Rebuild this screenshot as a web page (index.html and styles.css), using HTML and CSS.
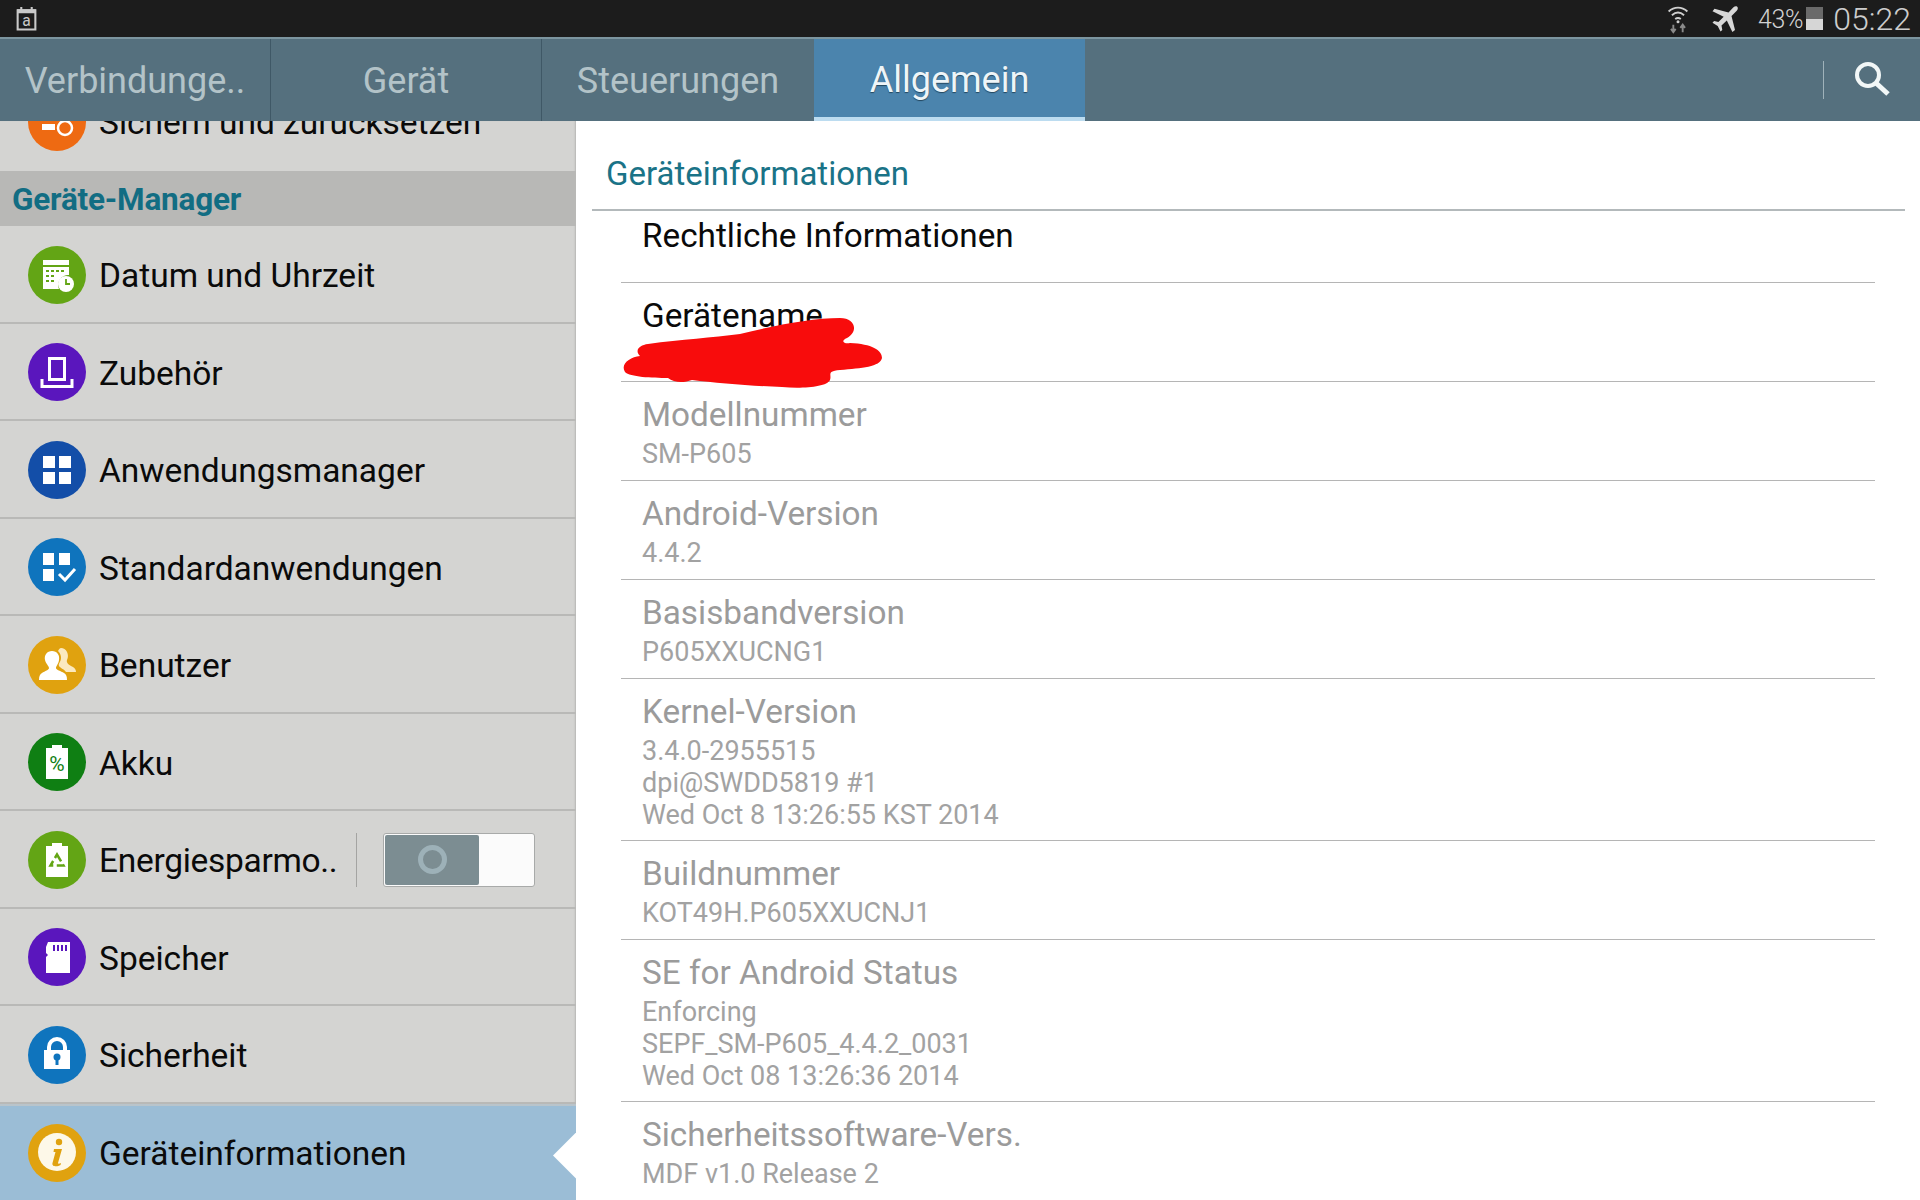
FILE: index.html
```html
<!DOCTYPE html>
<html lang="de">
<head>
<meta charset="utf-8">
<title>Geräteinformationen</title>
<link rel="stylesheet" href="styles.css">
</head>
<body>
<div class="screen">
  <header class="status">
    <svg class="st-cal" viewBox="0 0 20 24"><path d="M1.500 4h17v18.500h-17z" fill="none" stroke="#c9c9c9" stroke-width="2"/><path d="M1 3h18v4H1zM4 1h2v3H4zM14 1h2v3h-2z" fill="#c9c9c9"/><text x="10" y="19" text-anchor="middle" class="st-a">a</text></svg>
    <div class="status-right">
      <svg class="st-wifi" viewBox="0 0 24 32"><path d="M2 8c6-5.500 14-5.500 20 0M5.500 12c4-3.500 9-3.500 13 0M9 16c2-1.500 4-1.500 6 0" fill="none" stroke="#cfcfcf" stroke-width="2"/><circle cx="12" cy="19" r="1.600" fill="#cfcfcf"/><path d="M7 22v7M4.500 26.500L7 30l2.500-3.500" fill="none" stroke="#8a8a8a" stroke-width="2"/><path d="M17 30v-7M14.500 25.500L17 22l2.500 3.500" fill="none" stroke="#8a8a8a" stroke-width="2"/></svg>
      <svg class="st-plane" viewBox="0 0 28 28"><path d="M26 1.500c1.500 1 .8 3.200-.5 4.600L20.500 11l3.500 14-2.600 2-5.600-11.500-5.300 5 .8 4.500-1.800 1.500-2.800-5.500-5.200-3.200 1.600-1.700 4.300.9 5.300-5.300L1.500 6.200l2-2.500 14 3.700L22.200 2.500C23.500 1.300 25 .8 26 1.500z" fill="#d8d8d8"/></svg>
      <span class="st-pct">43%</span>
      <span class="st-batt"><span class="st-batt-fill"></span></span>
      <span class="st-time">05:22</span>
    </div>
  </header>

  <nav class="tabs">
    <div class="tab">Verbindunge..</div>
    <div class="tab">Gerät</div>
    <div class="tab">Steuerungen</div>
    <div class="tab tab-active">Allgemein</div>
    <div class="tab-spacer"></div>
    <div class="tab-search">
      <svg class="search-icon" viewBox="0 0 40 40"><circle cx="16" cy="15" r="11" fill="none" stroke="#f2f7f7" stroke-width="4"/><path d="M24 23l12 11" stroke="#f2f7f7" stroke-width="5"/></svg>
    </div>
  </nav>

  <main class="body">
    <aside class="side">
      <div class="row row-cut">
        <span class="ico ic-orange"><svg viewBox="0 0 58 58"><path d="M14 24h13v4H14zM14 31h13v6H14z" fill="#fff"/><circle cx="37" cy="35" r="7" fill="none" stroke="#fff" stroke-width="2.500"/></svg></span>
        <span class="row-text">Sichern und zurücksetzen</span>
      </div>
      <div class="side-head">Geräte-Manager</div>

      <div class="row">
        <span class="ico ic-lime"><svg viewBox="0 0 58 58"><path d="M15 14h26v5H15z" fill="#fff"/><path d="M15 21h26v8a10 10 0 0 0-10 14H15z" fill="#fff"/><path d="M18 24h3v2h-3zM23 24h3v2h-3zM28 24h3v2h-3zM33 24h3v2h-3zM18 29h3v2h-3zM23 29h3v2h-3zM18 34h3v2h-3zM23 34h3v2h-3z" fill="#63a515"/><circle cx="38" cy="38" r="8" fill="#fff"/><path d="M38 33v5h4" fill="none" stroke="#63a515" stroke-width="1.800"/></svg></span>
        <span class="row-text">Datum und Uhrzeit</span>
      </div>
      <div class="row">
        <span class="ico ic-purple"><svg viewBox="0 0 58 58"><path d="M21.500 15.500h15v21h-15z" fill="none" stroke="#fff" stroke-width="3"/><path d="M14 36v7.500h30V36" fill="none" stroke="#fff" stroke-width="3"/></svg></span>
        <span class="row-text">Zubehör</span>
      </div>
      <div class="row">
        <span class="ico ic-navy"><svg viewBox="0 0 58 58"><path d="M15 15h12v12H15zM31 15h12v12H31zM15 31h12v12H15zM31 31h12v12H31z" fill="#fff"/></svg></span>
        <span class="row-text">Anwendungsmanager</span>
      </div>
      <div class="row">
        <span class="ico ic-blue"><svg viewBox="0 0 58 58"><path d="M15 15h11v12H15zM31 15h11v12H31zM15 31h11v12H15z" fill="#fff"/><path d="M31 36l6 6 10-11" fill="none" stroke="#fff" stroke-width="3"/></svg></span>
        <span class="row-text">Standardanwendungen</span>
      </div>
      <div class="row">
        <span class="ico ic-amber"><svg viewBox="0 0 58 58"><path d="M33 12a7 8 0 0 1 6 12c-1 3 2 5 6 7 2 1 3 3 3 5H38c-2-3-6-4-7-6-1-3 2-4 2-8 0-3-1-5-3-7 1-2 2-3 3-3z" fill="#fbe9bf"/><path d="M24 15c5 0 8 4 7 9-.5 4-3 6-3 8 0 2 5 3 8 5 2 1 3 3 3 7H11c0-4 1-6 3-7 3-2 7-3 7-5s-3-4-4-8c-1-5 2-9 7-9z" fill="#fff"/></svg></span>
        <span class="row-text">Benutzer</span>
      </div>
      <div class="row">
        <span class="ico ic-green"><svg viewBox="0 0 58 58"><path d="M24 12h10v3h6v31H18V15h6z" fill="#fff"/><text x="29" y="38" text-anchor="middle" class="ico-pct">%</text></svg></span>
        <span class="row-text">Akku</span>
      </div>
      <div class="row">
        <span class="ico ic-lime"><svg viewBox="0 0 58 58"><path d="M24 12h10v3h6v31H18V15h6z" fill="#fff"/><path d="M29 23.500l6.500 11H22.500z" fill="none" stroke="#63a515" stroke-width="2.500" stroke-dasharray="8 3.500"/></svg></span>
        <span class="row-text row-text-fill">Energiesparmo..</span>
        <span class="row-sep"></span>
        <span class="switch"><span class="switch-knob"><span class="switch-ring"></span></span></span>
      </div>
      <div class="row">
        <span class="ico ic-purple"><svg viewBox="0 0 58 58"><path d="M20 14h22v31H18V29l2-2-2-2v-6z" fill="#fff"/><path d="M25 17h2v6h-2zM29 17h2v6h-2zM33 17h2v6h-2zM37 17h2v6h-2z" fill="#5a16bd"/></svg></span>
        <span class="row-text">Speicher</span>
      </div>
      <div class="row">
        <span class="ico ic-blue"><svg viewBox="0 0 58 58"><path d="M21 25v-4a8 8 0 0 1 16 0v4" fill="none" stroke="#fff" stroke-width="4"/><path d="M16 24h26v19H16z" fill="#fff"/><circle cx="29" cy="31" r="3.500" fill="#0f74bd"/><path d="M27.500 32h3v7h-3z" fill="#0f74bd"/></svg></span>
        <span class="row-text">Sicherheit</span>
      </div>
      <div class="row row-active">
        <span class="ico ic-amber"><svg viewBox="0 0 58 58"><circle cx="29" cy="28" r="19" fill="#fdf8e8"/><circle cx="31" cy="18" r="3.200" fill="#e0a20f"/><path d="M26 25h8l-4 14c0 1 1 1 3 0l-.5 2c-3 2-9 2-8-2l3-11h-2z" fill="#e0a20f"/></svg></span>
        <span class="row-text">Geräteinformationen</span>
        <span class="notch"></span>
      </div>
    </aside>

    <section class="detail">
      <h1 class="detail-title">Geräteinformationen</h1>
      <div class="list">
        <div class="item item-short"><div class="item-title item-dark">Rechtliche Informationen</div></div>
        <div class="item"><div class="item-title item-dark">Gerätename</div></div>
        <div class="item"><div class="item-title">Modellnummer</div><div class="item-sub">SM-P605</div></div>
        <div class="item"><div class="item-title">Android-Version</div><div class="item-sub">4.4.2</div></div>
        <div class="item"><div class="item-title">Basisbandversion</div><div class="item-sub">P605XXUCNG1</div></div>
        <div class="item item-tall"><div class="item-title">Kernel-Version</div><div class="item-sub">3.4.0-2955515<br>dpi@SWDD5819 #1<br>Wed Oct 8 13:26:55 KST 2014</div></div>
        <div class="item"><div class="item-title">Buildnummer</div><div class="item-sub">KOT49H.P605XXUCNJ1</div></div>
        <div class="item item-tall"><div class="item-title">SE for Android Status</div><div class="item-sub">Enforcing<br>SEPF_SM-P605_4.4.2_0031<br>Wed Oct 08 13:26:36 2014</div></div>
        <div class="item item-last"><div class="item-title">Sicherheitssoftware-Vers.</div><div class="item-sub">MDF v1.0 Release 2</div></div>
      </div>
      <svg class="scribble" viewBox="0 0 270 72"><path d="M26 27C60 22 90 21 118 17C150 9 190 1 218 1C233 1 237 14 225 21C218 24 222 27 228 26C250 27 260 33 260 41C258 50 240 51 218 53C204 54 210 58 208 63C205 70 180 72 160 70C130 69 95 66 70 63C62 66 52 66 46 61C30 61 8 60 3 55C-2 47 8 40 18 39C12 33 18 28 26 27Z" fill="#f80c0c"/></svg>
    </section>
  </main>
</div>
</body>
</html>
```

FILE: styles.css
```css
* { box-sizing: border-box; }
html, body { margin: 0; padding: 0; }
body { width: 1920px; height: 1200px; overflow: hidden; background: #fff; font-family: Roboto, "Liberation Sans", sans-serif; }
.screen { width: 1920px; height: 1200px; display: flex; flex-direction: column; overflow: hidden; }

.status { height: 37px; flex: none; background: #1c1c1c; display: flex; align-items: center; justify-content: space-between; padding: 0 9px 0 16px; }
.st-cal { width: 21px; height: 25px; }
.st-a { font-size: 15px; fill: #c9c9c9; font-family: Roboto, sans-serif; }
.status-right { display: flex; align-items: center; }
.st-wifi { width: 26px; height: 30px; margin-right: 20px; }
.st-plane { width: 28px; height: 28px; margin-right: 19px; }
.st-pct { font-size: 25px; font-weight: 300; color: #d2d2d2; letter-spacing: -0.3px; padding-top: 2px; }
.st-batt { width: 17px; height: 23px; margin: 0 10px 0 3px; background: #6a6a6a; display: flex; align-items: flex-end; }
.st-batt-fill { display: block; width: 100%; height: 11px; background: #d6d6d6; }
.st-time { font-size: 32px; font-weight: 300; color: #cdcdcd; line-height: 36px; }

.tabs { height: 84px; flex: none; display: flex; background: #55707e; border-top: 2px solid #7c959f; position: relative; z-index: 2; }
.tab { width: 271px; display: flex; align-items: center; justify-content: center; font-size: 36px; color: #b3c3c8; border-right: 1px solid #3f5866; white-space: nowrap; padding-top: 1px; }
.tab:nth-child(3) { border-right: 0; width: 272px; }
.tab-active { background: #4b84ad; color: #eef5f8; border-right: 0; border-bottom: 4px solid #bcdcf0; padding-top: 4px; text-shadow: 0 1px 1px #23475f; }
.tab-spacer { flex: 1; }
.tab-search { width: 97px; display: flex; align-items: center; justify-content: center; position: relative; }
.tab-search::before { content: ""; position: absolute; left: 0; top: 22px; height: 38px; border-left: 1px solid #9fb2ba; }
.search-icon { width: 40px; height: 40px; }

.body { flex: 1; display: flex; min-height: 0; position: relative; }
.side { width: 576px; flex: none; background: #d4d4d2; overflow: hidden; box-shadow: inset -2px 0 2px -1px #b5b5b3; }
.row { height: 97.500px; display: flex; align-items: center; padding: 2px 0 0 28px; border-bottom: 2px solid #b9b9b7; position: relative; }
.row-cut { margin-top: -47.500px; border-bottom: 0; padding-top: 0; }
.ico { width: 58px; height: 58px; border-radius: 50%; flex: none; margin-right: 13px; display: block; }
.ico svg { width: 58px; height: 58px; display: block; }
.ic-orange { background: #ee6a12; }
.ic-lime { background: #63a515; }
.ic-purple { background: #5a16bd; }
.ic-navy { background: #134ea8; }
.ic-blue { background: #0f74bd; }
.ic-amber { background: #e0a20f; }
.ic-green { background: #0f7f13; }
.ico-pct { font-size: 21px; fill: #0f7f13; font-family: Roboto, sans-serif; }
.row-text { font-size: 33.500px; color: #0a0a0a; white-space: nowrap; padding-top: 2px; }
.row-cut .row-text, .row-active .row-text { padding-top: 0; }
.row-text-fill { width: 257px; letter-spacing: -0.3px; }
.row-sep { height: 54px; border-left: 1px solid #a4a4a2; }
.switch { width: 152px; height: 54px; margin-left: 26px; border: 1px solid #a8aaa9; border-radius: 3px; background: #fbfbfb; padding: 1px; display: block; }
.switch-knob { width: 94px; height: 100%; background: #7c8d92; border-radius: 2px; display: flex; align-items: center; justify-content: center; }
.switch-ring { width: 29px; height: 29px; border-radius: 50%; border: 5px solid #9db1b8; }
.row-active { background: #9bbdd6; border-bottom: 0; border-top: 2px solid #b9c4cb; padding-top: 0; }
.notch { position: absolute; right: 0; top: 27px; width: 23px; height: 46px; background: #fff; clip-path: polygon(100% 0, 0 50%, 100% 100%); }

.side-head { height: 55px; background: #b8b8b6; color: #126d83; font-size: 31.500px; font-weight: 700; padding: 2px 0 0 12px; display: flex; align-items: center; letter-spacing: -0.2px; }

.detail { flex: 1; padding: 0 15px 0 16px; position: relative; overflow: hidden; min-width: 0; }
.detail-title { margin: 0; height: 90px; border-bottom: 2px solid #b3b9bb; font-size: 33px; font-weight: 400; color: #1a7387; padding: 33px 0 0 14px; line-height: 40px; }
.list { padding: 0 30px 0 29px; }
.item { height: 99px; border-bottom: 1px solid #b5b5b5; padding: 10px 0 0 21px; }
.item-short { height: 72px; }
.item-tall { height: 162px; }
.item-last { border-bottom: 0; }
.item-title { font-size: 33.300px; line-height: 46px; color: #9b9b9b; white-space: nowrap; }
.item-dark { color: #0a0a0a; }
.item-short .item-title { position: relative; top: -8px; }
.item-sub { font-size: 27px; line-height: 32px; color: #a2a2a2; white-space: nowrap; }
.scribble { position: absolute; left: 46px; top: 196px; width: 270px; height: 72px; }
```
